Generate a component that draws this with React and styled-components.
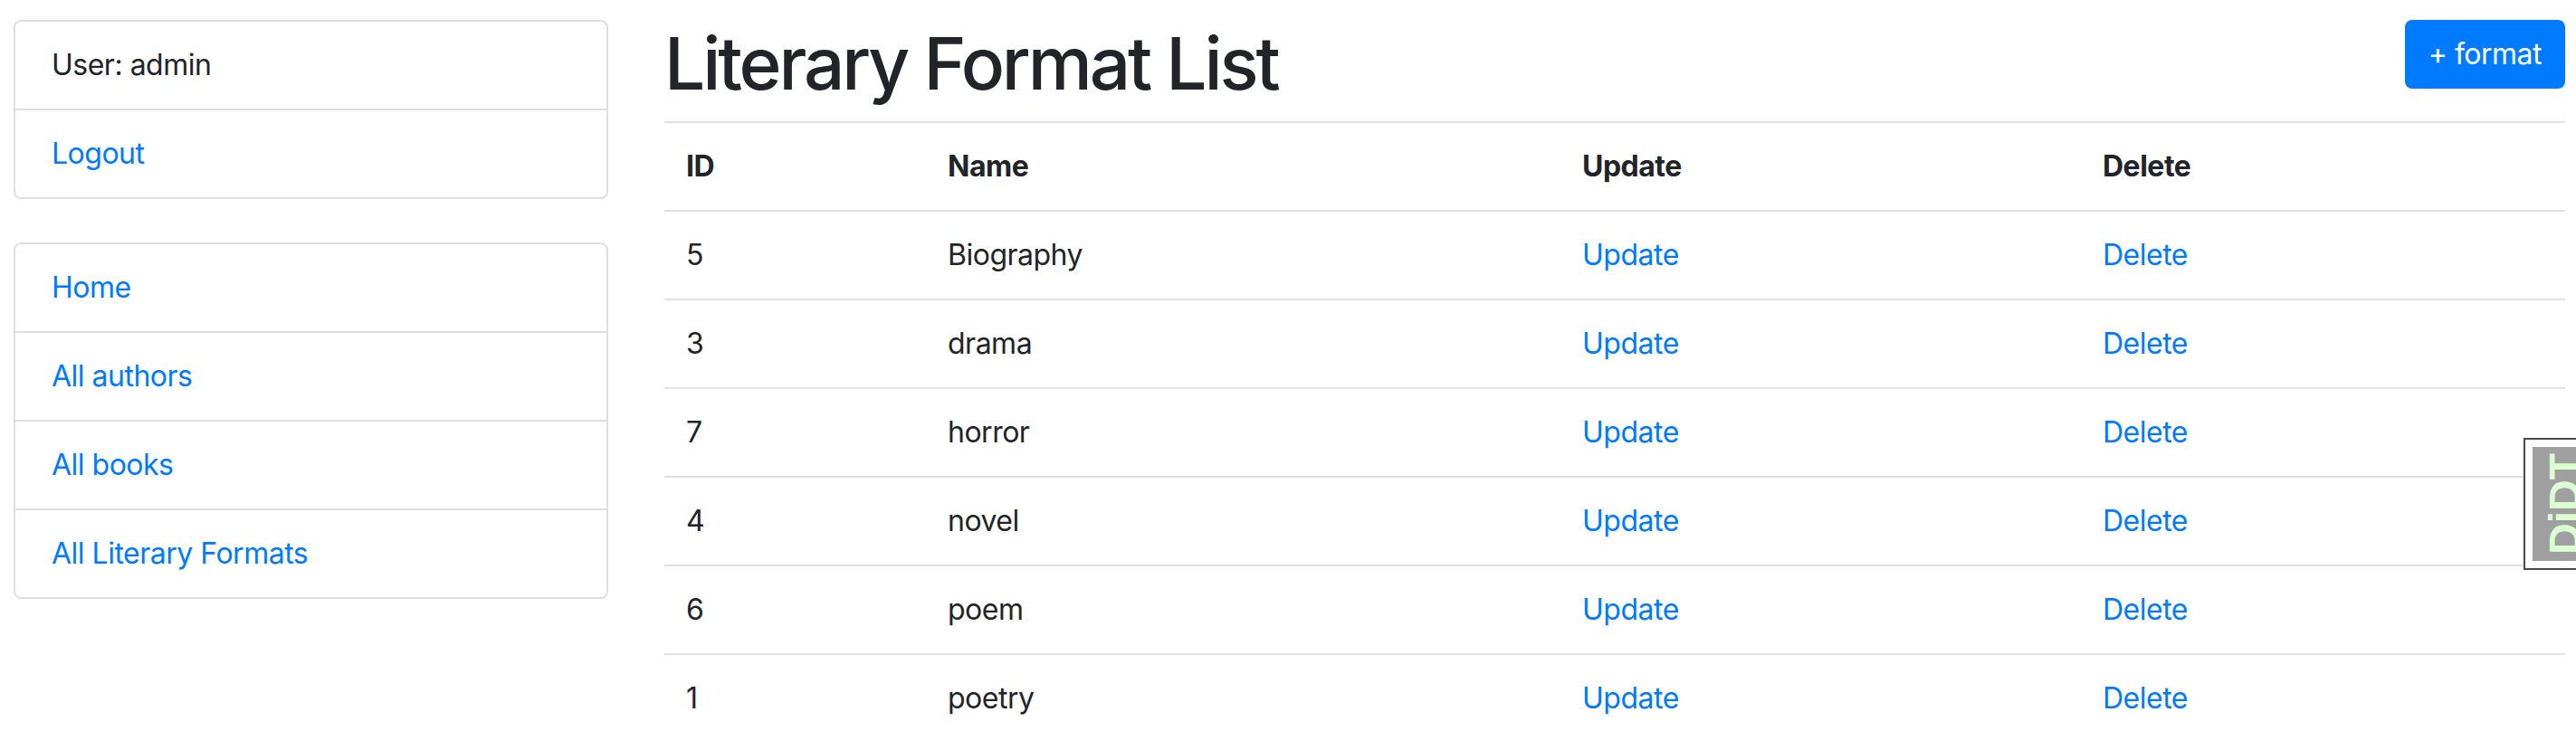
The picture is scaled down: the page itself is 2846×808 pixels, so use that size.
import React from "react";
import styled, { createGlobalStyle } from "styled-components";

const GlobalStyle = createGlobalStyle`
  html, body {
    margin: 0;
    padding: 0;
    background: #ffffff;
  }
  body {
    font-family: Inter, "Liberation Sans", Arial, sans-serif;
    font-size: 32px;
    line-height: 48px;
    letter-spacing: -0.5px;
    color: #212529;
    overflow: hidden;
  }
  * { box-sizing: border-box; }
`;

const Page = styled.div`
  display: flex;
  align-items: flex-start;
  gap: 62px;
  padding: 22px 12px 0 15px;
  width: 2846px;
  height: 808px;
`;

const Sidebar = styled.aside`
  flex: 0 0 657px;
  display: flex;
  flex-direction: column;
  gap: 48px;
`;

const ListGroup = styled.ul`
  list-style: none;
  margin: 0;
  padding: 0;
  border: 2px solid #dfdfdf;
  border-radius: 8px;
  overflow: hidden;
`;

const ListItem = styled.li`
  padding: 24px 40px;
  & + & {
    border-top: 2px solid #dfdfdf;
  }
`;

const Link = styled.a`
  color: #007bff;
  text-decoration: none;
  cursor: pointer;
`;

const Main = styled.main`
  flex: 1 1 auto;
  min-width: 0;
`;

const HeaderRow = styled.div`
  display: flex;
  justify-content: space-between;
  align-items: flex-start;
`;

const Title = styled.h1`
  margin: 0 0 16px;
  font-size: 80px;
  line-height: 96px;
  font-weight: 500;
  letter-spacing: -3.1px;
`;

const PrimaryButton = styled.button`
  font-family: inherit;
  font-size: 32px;
  line-height: 48px;
  font-weight: 400;
  letter-spacing: -0.5px;
  color: #ffffff;
  background: #007bff;
  border: 2px solid #007bff;
  border-radius: 8px;
  padding: 12px 24px;
  cursor: pointer;
`;

const Table = styled.table`
  width: 100%;
  table-layout: fixed;
  border-collapse: collapse;
  border-top: 2px solid #dee2e6;
`;

const Col = styled.col`
  width: ${(p) => p.$w}px;
`;

const Row = styled.tr`
  border-bottom: 2px solid #dee2e6;
`;

const HeadCell = styled.th`
  text-align: left;
  vertical-align: top;
  padding: 24px;
  font-weight: 700;
`;

const Cell = styled.td`
  text-align: left;
  vertical-align: top;
  padding: 24px;
  font-weight: 400;
`;

const DebugHandle = styled.div`
  position: fixed;
  left: 2788px;
  top: 484px;
  width: 90px;
  height: 146px;
  border: 2px solid #4a4a4a;
  background: #ffffff;
  padding: 8px;
`;

const DebugButton = styled.div`
  width: 100%;
  height: 100%;
  background: #a0a0a0;
  display: flex;
  align-items: center;
  justify-content: flex-start;
  overflow: hidden;
`;

const DebugLabel = styled.span`
  display: block;
  writing-mode: vertical-rl;
  transform: rotate(180deg);
  font-family: "Liberation Sans", Arial, sans-serif;
  font-weight: 700;
  font-size: 48px;
  line-height: 48px;
  letter-spacing: 0;
  color: #dcffd2;
  margin-left: 12px;
`;

const formats = [
  { id: 5, name: "Biography" },
  { id: 3, name: "drama" },
  { id: 7, name: "horror" },
  { id: 4, name: "novel" },
  { id: 6, name: "poem" },
  { id: 1, name: "poetry" },
];

export default function App() {
  return (
    <>
      <GlobalStyle />
      <Page>
        <Sidebar>
          <ListGroup>
            <ListItem>User: admin</ListItem>
            <ListItem>
              <Link>Logout</Link>
            </ListItem>
          </ListGroup>
          <ListGroup>
            <ListItem>
              <Link>Home</Link>
            </ListItem>
            <ListItem>
              <Link>All authors</Link>
            </ListItem>
            <ListItem>
              <Link>All books</Link>
            </ListItem>
            <ListItem>
              <Link>All Literary Formats</Link>
            </ListItem>
          </ListGroup>
        </Sidebar>
        <Main>
          <HeaderRow>
            <Title>Literary Format List</Title>
            <PrimaryButton>+ format</PrimaryButton>
          </HeaderRow>
          <Table>
            <colgroup>
              <Col $w={289} />
              <Col $w={701} />
              <Col $w={575} />
              <Col $w={535} />
            </colgroup>
            <thead>
              <Row>
                <HeadCell>ID</HeadCell>
                <HeadCell>Name</HeadCell>
                <HeadCell>Update</HeadCell>
                <HeadCell>Delete</HeadCell>
              </Row>
            </thead>
            <tbody>
              {formats.map((f) => (
                <Row key={f.id}>
                  <Cell>{f.id}</Cell>
                  <Cell>{f.name}</Cell>
                  <Cell>
                    <Link>Update</Link>
                  </Cell>
                  <Cell>
                    <Link>Delete</Link>
                  </Cell>
                </Row>
              ))}
            </tbody>
          </Table>
        </Main>
      </Page>
      <DebugHandle>
        <DebugButton>
          <DebugLabel>DjDT</DebugLabel>
        </DebugButton>
      </DebugHandle>
    </>
  );
}
